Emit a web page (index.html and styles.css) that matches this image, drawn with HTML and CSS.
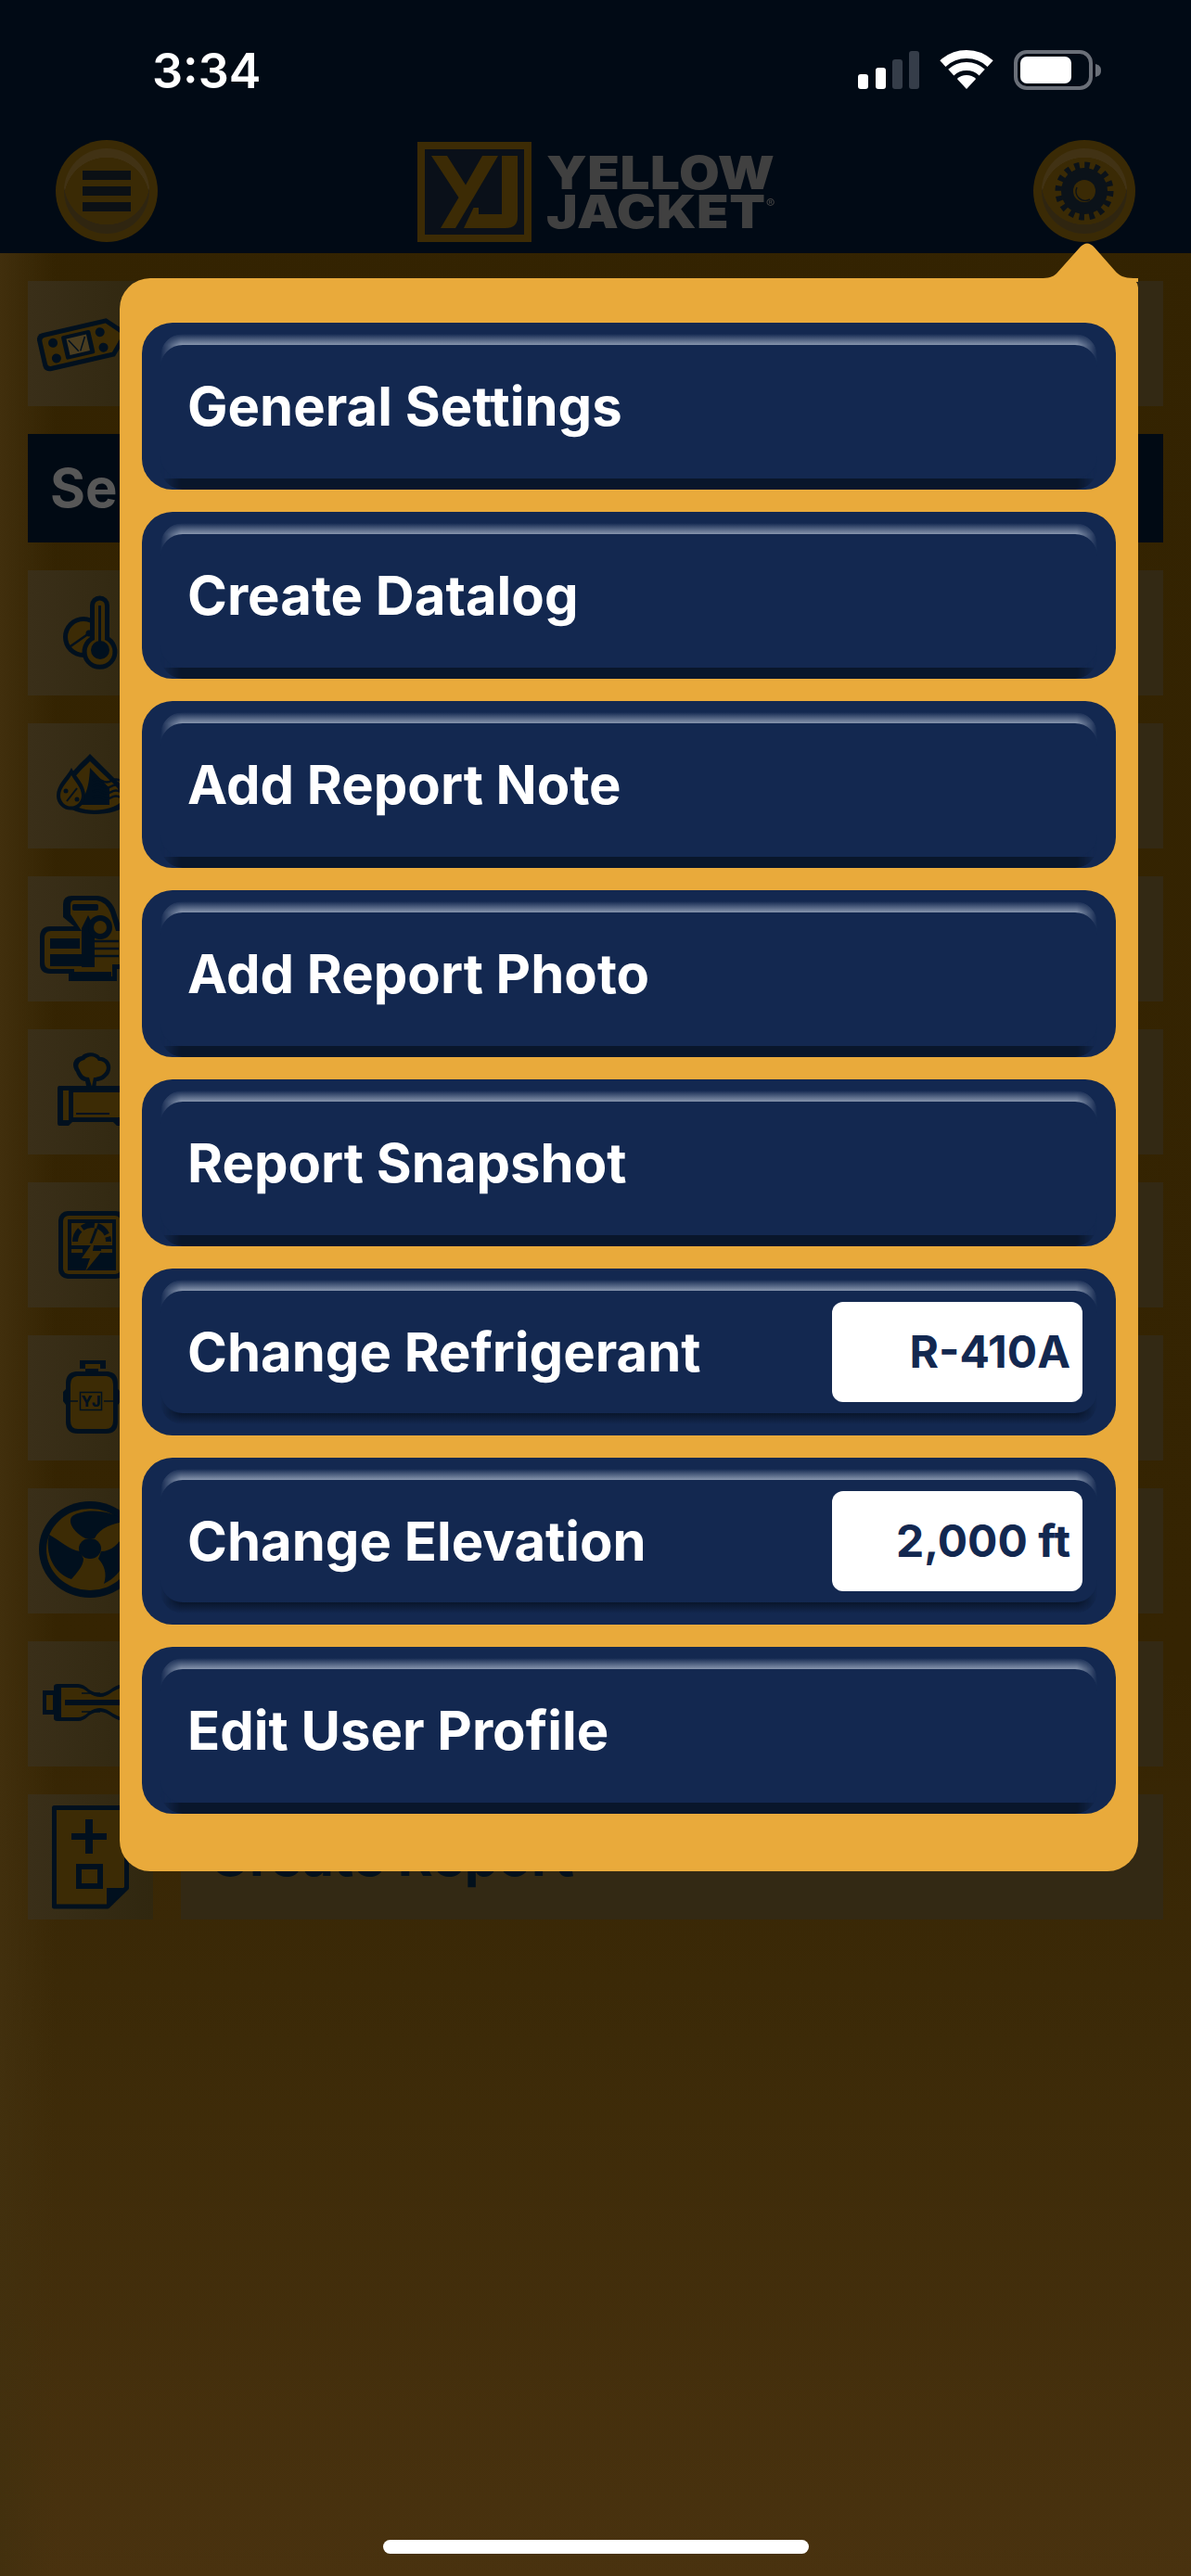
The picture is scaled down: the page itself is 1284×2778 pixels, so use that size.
FILE: index.html
```html
<!DOCTYPE html>
<html lang="en">
<head>
    <meta charset="UTF-8">
    <meta name="viewport" content="width=device-width, initial-scale=1.0">
    <title>Settings Menu</title>
    <link rel="stylesheet" href="styles.css">
</head>
<body>
    <header class="topbar">
        <div class="status">
            <span class="time">3:34</span>
            <svg class="status-icons" viewBox="0 0 262 43">
                <rect x="0" y="26" width="11" height="16" rx="3" fill="#fff"/>
                <rect x="19" y="19" width="11" height="23" rx="3" fill="#fff"/>
                <rect x="37" y="10" width="11" height="32" rx="3" fill="#353d49"/>
                <rect x="55" y="1" width="11" height="41" rx="3" fill="#353d49"/>
                <path d="M91.4 14.6A37.5 37.5 0 0 1 142.6 14.6" fill="none" stroke="#fff" stroke-width="9"/>
                <path d="M100.3 24.1A24.5 24.5 0 0 1 133.7 24.1" fill="none" stroke="#fff" stroke-width="9"/>
                <path d="M117 42L106.8 31A15 15 0 0 1 127.2 31Z" fill="#fff"/>
                <rect x="170" y="2" width="81" height="39" rx="12" fill="none" stroke="#6a6f78" stroke-width="4"/>
                <rect x="175" y="7" width="55" height="29" rx="7" fill="#fff"/>
                <path d="M256 15c4 1 6 3 6 7s-2 6-6 7z" fill="#6a6f78"/>
            </svg>
        </div>
        <nav class="navbar">
            <div class="round-btn">
                <span class="burger"></span>
                <span class="burger"></span>
                <span class="burger"></span>
            </div>
            <div class="logo">
                <svg class="logo-mark" viewBox="0 0 123 108">
                    <rect x="4" y="4" width="115" height="100" fill="#0a1019" stroke="#3c2b05" stroke-width="8"/>
                    <path d="M15 15H32L52 46.500L70 15H87L41 93H25L44.500 60z" fill="#3c2b05"/>
                    <path d="M91 15H108V81Q108 93 95 93H50L60.500 71H66V78H91z" fill="#3c2b05"/>
                </svg>
                <div class="wordmark">
                    <span>YELLOW</span>
                    <span>JACKET<sup>®</sup></span>
                </div>
            </div>
            <div class="round-btn">
                <svg class="gear" viewBox="0 0 64 64">
                    <circle cx="32" cy="32" r="28" fill="none" stroke="#0b1219" stroke-width="7" stroke-dasharray="5.500 5.500"/>
                    <circle cx="32" cy="32" r="25" fill="#0b1219"/>
                    <circle cx="32" cy="32" r="12" fill="#3a2a05"/>
                    <path d="M24 28a10 10 0 0 0 14 13" fill="none" stroke="#0b1219" stroke-width="1.500"/>
                </svg>
            </div>
        </nav>
    </header>

    <main class="screen">
        <div class="row">
            <div class="cell-icon">
                <svg class="row-icon" viewBox="0 0 135 135">
                    <g transform="rotate(-13 62 67)">
                        <path class="ink" d="M19 46H90L110 67 90 88H19a7 7 0 0 1-7-7V53a7 7 0 0 1 7-7z"/>
                        <path class="tan" d="M21 51H88L103 67 88 83H21a4 4 0 0 1-4-4V55a4 4 0 0 1 4-4z"/>
                        <circle class="ink" cx="28" cy="59" r="5"/>
                        <circle class="ink" cx="28" cy="76" r="5"/>
                        <circle class="ink" cx="80" cy="59" r="5"/>
                        <circle class="ink" cx="80" cy="76" r="5"/>
                        <rect class="ink" x="38" y="54" width="32" height="26" rx="2"/>
                        <rect x="43" y="58" width="22" height="18" fill="#4a3d20"/>
                        <path class="line" d="M45 60l8 14m10-14l-8 14" stroke-width="1.500"/>
                    </g>
                </svg>
            </div>
            <div class="cell-label"></div>
        </div>

        <div class="section-head">Se</div>

        <div class="row">
            <div class="cell-icon">
                <svg class="row-icon" viewBox="0 0 135 135">
                    <circle class="ink" cx="60" cy="72" r="22"/>
                    <circle class="tan" cx="60" cy="72" r="17"/>
                    <path class="line" d="M46 82L66 68" stroke-width="2.500"/>
                    <circle class="ink" cx="66" cy="68" r="3.500"/>
                    <path class="ink" d="M67 38a10.500 10.500 0 0 1 21 0V72a19 19 0 1 1-21 0z"/>
                    <path class="tan" d="M72 38a5.500 5.500 0 0 1 11 0V75a14 14 0 1 1-11 0z"/>
                    <circle class="ink" cx="78" cy="86" r="10"/>
                    <rect class="ink" x="76" y="38" width="3" height="40"/>
                </svg>
            </div>
            <div class="cell-label"></div>
        </div>

        <div class="row">
            <div class="cell-icon">
                <svg class="row-icon" viewBox="0 0 135 135">
                    <path class="ink" d="M67 33L96 62C108 72 112 80 106 88 96 100 50 104 36 84 28 70 52 48 67 33z"/>
                    <path class="tan" d="M67 41L90 63C100 72 104 80 100 85 90 96 52 98 42 82 36 70 56 52 67 41z"/>
                    <path class="ink" d="M67 48L88 70V88H50C60 84 66 74 67 48z"/>
                    <path class="ink" d="M47 48C52 58 62 66 62 78A15.500 15.500 0 0 1 31 78C31 66 42 58 47 48z"/>
                    <path class="tan" d="M47 56C50 62 58 69 58 78A11.500 11.500 0 0 1 35 78C35 69 44 62 47 56z"/>
                    <path class="line" d="M42 84L53 70" stroke-width="2"/>
                    <circle class="ink" cx="41" cy="73" r="2.500"/>
                    <circle class="ink" cx="53" cy="82" r="2.500"/>
                    <path class="wave" d="M70 62q5-3 10 0t10 0 10 0M70 68q5-3 10 0t10 0 10 0M70 74q5-3 10 0t10 0 10 0M70 80q5-3 10 0t10 0 10 0"/>
                </svg>
            </div>
            <div class="cell-label"></div>
        </div>

        <div class="row">
            <div class="cell-icon">
                <svg class="row-icon" viewBox="0 0 135 135">
                    <path class="ink" d="M48 21H75Q88 22 94 36L100 54H110V100H96V113H44V105H24Q13 105 13 94V66Q13 54 24 54H50L38 44V30Q38 21 48 21z"/>
                    <path class="tan" d="M50 26H74Q84 27 89 39L95 59H106V95H91V108H50V100H25Q18 100 18 93V67Q18 59 25 59H58L46 41V31Q46 26 50 26z"/>
                    <rect class="ink" x="48" y="30" width="28" height="7" rx="2"/>
                    <path class="ink" d="M24 67H56V78H24zM24 84H58L68 97H24z"/>
                    <path class="ink" d="M58 56L65 42 72 56V98H58z"/>
                    <circle class="ink" cx="78" cy="55" r="13"/>
                    <circle class="tan" cx="78" cy="55" r="7"/>
                    <rect class="ink" x="50" y="103" width="40" height="5"/>
                    <path class="wave" d="M72 70H98M72 78H98M72 86H98" stroke-width="2"/>
                </svg>
            </div>
            <div class="cell-label"></div>
        </div>

        <div class="row">
            <div class="cell-icon">
                <svg class="row-icon" viewBox="0 0 135 135">
                    <path class="ink" d="M52 46C46 38 50 30 58 29 62 24 74 24 78 30 86 30 92 38 88 47 84 54 78 56 74 56L73 66H64L62 56C58 56 54 52 52 46z"/>
                    <path class="tan" d="M56 44C52 38 56 34 61 33 65 28 73 28 76 34 82 33 87 39 84 45 81 50 76 52 71 52L69 62 66 52C61 52 58 49 56 44z"/>
                    <path class="ink" d="M34 61H106V104H96L92 100H48L44 104H34Q32 104 32 101V64Q32 61 34 61z"/>
                    <path class="tan" d="M38 66H44V98H38zM49 68H100V95H49z"/>
                    <rect class="ink" x="52" y="90" width="36" height="2"/>
                </svg>
            </div>
            <div class="cell-label"></div>
        </div>

        <div class="row">
            <div class="cell-icon">
                <svg class="row-icon" viewBox="0 0 135 135">
                    <rect class="ink" x="33" y="31" width="72" height="73" rx="10"/>
                    <rect class="tan" x="38" y="36" width="62" height="63" rx="6"/>
                    <rect class="ink" x="43" y="40" width="52" height="55"/>
                    <rect class="tan" x="47" y="44" width="44" height="24"/>
                    <path class="line" d="M51 64a18 18 0 0 1 36 0" stroke-width="6" stroke-dasharray="14 3"/>
                    <path class="line" d="M68 66L74 50" stroke-width="3"/>
                    <rect class="tan" x="47" y="72" width="12" height="4"/>
                    <rect class="tan" x="79" y="72" width="12" height="4"/>
                    <path class="tan" d="M72 62L58 82H67L62 96 80 74H70z"/>
                </svg>
            </div>
            <div class="cell-label"></div>
        </div>

        <div class="row">
            <div class="cell-icon">
                <svg class="row-icon" viewBox="0 0 135 135">
                    <path class="ink" d="M56 27H84V36H76V39H86Q97 40 97 52V58L100 61V71L97 75V93Q97 106 84 106H54Q41 106 41 93V75L38 71V61L41 58V52Q41 40 52 39H62V36H56z"/>
                    <path class="tan" d="M53 44H85Q92 45 92 53V92Q92 101 84 101H54Q46 101 46 92V53Q46 45 53 44z"/>
                    <rect class="tan" x="62" y="31" width="16" height="5"/>
                    <rect class="line" x="56.500" y="61.500" width="23" height="19" stroke-width="1.500"/>
                    <text class="tank-mark" x="68" y="77" text-anchor="middle">YJ</text>
                    <path class="line" d="M46 71H54M82 71H92" stroke-width="1.500"/>
                </svg>
            </div>
            <div class="cell-label"></div>
        </div>

        <div class="row">
            <div class="cell-icon">
                <svg class="row-icon" viewBox="0 0 135 135">
                    <ellipse class="ink" cx="67" cy="66" rx="55" ry="52"/>
                    <ellipse class="tan" cx="67" cy="66" rx="47" ry="44"/>
                    <path class="ink" d="M62 54C50 48 42 36 48 30 60 22 90 22 104 36 92 38 78 42 72 54z"/>
                    <path class="ink" d="M56 68C44 66 34 56 23 50 18 70 28 92 47 98 52 92 60 84 60 76z"/>
                    <path class="ink" d="M79 68C90 68 98 60 104 50 112 70 104 92 82 103 86 92 82 82 76 76z"/>
                    <ellipse class="ink" cx="67" cy="65" rx="12" ry="11"/>
                </svg>
            </div>
            <div class="cell-label"></div>
        </div>

        <div class="row">
            <div class="cell-icon">
                <svg class="row-icon" viewBox="0 0 135 135">
                    <path class="ink" d="M16 53H28V49Q28 46 32 46H54Q60 46 66 52 72 56 78 56T92 50Q98 46 106 46V86Q98 86 92 82 84 76 78 76T66 80Q60 86 54 86H32Q28 86 28 83V79H16z"/>
                    <path class="tan" d="M20 58H27V74H20zM36 50H54Q60 50 66 56 72 60 78 60T92 54L100 50V82L92 78Q84 72 78 72T66 76Q60 82 54 82H36z"/>
                    <rect class="ink" x="40" y="63" width="62" height="6"/>
                    <path class="line" d="M58 56H78M58 76H78" stroke-width="1.500"/>
                </svg>
            </div>
            <div class="cell-label"></div>
        </div>

        <div class="row">
            <div class="cell-icon">
                <svg class="row-icon" viewBox="0 0 135 135">
                    <path class="tan" stroke="#01101e" stroke-width="5" stroke-linejoin="round" d="M28.500 14.500H106.500V101L86 121H28.500z"/>
                    <path class="ink" d="M62 27h8v15h15v7H70v15h-8V49H47v-7h15z"/>
                    <rect class="doc-box" x="55" y="78" width="23" height="21"/>
                    <path class="ink" d="M85 101H106V104L88 120H85z"/>
                </svg>
            </div>
            <div class="cell-label">Create Report</div>
        </div>
    </main>

    <div class="popup">
        <svg class="popup-arrow" viewBox="0 0 105 42">
            <path d="M0 38C8 38 13 37 17 33L42 5Q50-4 58 5L80 30C84 35 90 38 100 38H105V42H0z"/>
        </svg>
        <button class="menu-btn"><span class="menu-face"><span class="menu-label">General Settings</span></span></button>
        <button class="menu-btn"><span class="menu-face"><span class="menu-label">Create Datalog</span></span></button>
        <button class="menu-btn"><span class="menu-face"><span class="menu-label">Add Report Note</span></span></button>
        <button class="menu-btn"><span class="menu-face"><span class="menu-label">Add Report Photo</span></span></button>
        <button class="menu-btn"><span class="menu-face"><span class="menu-label">Report Snapshot</span></span></button>
        <button class="menu-btn has-value"><span class="menu-face"><span class="menu-label">Change Refrigerant</span><span class="menu-value">R-410A</span></span></button>
        <button class="menu-btn has-value"><span class="menu-face"><span class="menu-label">Change Elevation</span><span class="menu-value">2,000 ft</span></span></button>
        <button class="menu-btn"><span class="menu-face"><span class="menu-label">Edit User Profile</span></span></button>
    </div>

    <div class="home-bar"></div>
</body>
</html>
```

FILE: styles.css
```css
* {
    box-sizing: border-box;
}
body {
    position: relative;
    width: 1284px;
    height: 2778px;
    margin: 0;
    overflow: hidden;
    font-family: Inter, "Liberation Sans", sans-serif;
    background:
        linear-gradient(to right, rgba(66, 48, 14, 0.9), rgba(66, 48, 14, 0) 60px),
        linear-gradient(#332301 0, #352402 1800px, #3c2a08 2200px, #49320f 100%);
}

/* top bar */
.topbar {
    height: 273px;
    background: #010a15;
}
.status {
    display: flex;
    justify-content: space-between;
    height: 151px;
    padding: 54px 97px 0 164px;
}
.time {
    margin-top: 1px;
    color: #fff;
    font-size: 52px;
    font-weight: 600;
    line-height: 44px;
}
.status-icons {
    width: 262px;
    height: 43px;
}
.navbar {
    display: flex;
    justify-content: space-between;
    padding: 0 60px;
}
.round-btn {
    position: relative;
    display: flex;
    flex-direction: column;
    align-items: center;
    justify-content: center;
    gap: 7px;
    width: 110px;
    height: 110px;
    border-radius: 50%;
    background: #3a2a05;
}
.round-btn::before,
.round-btn::after {
    content: "";
    position: absolute;
    inset: 9px;
    border-radius: 50%;
}
.round-btn::before {
    background: radial-gradient(circle at 50% 56px, transparent 46px, #413214 46.500px);
}
.round-btn::after {
    background: radial-gradient(circle at 50% 36px, transparent 46px, #2f2510 46.500px);
}
.burger {
    position: relative;
    z-index: 1;
    width: 52px;
    height: 10px;
    background: #0b1015;
}
.gear {
    position: relative;
    z-index: 1;
    width: 64px;
    height: 64px;
}
.logo {
    display: flex;
    gap: 16px;
    margin-top: 2px;
}
.logo-mark {
    width: 123px;
    height: 108px;
}
.wordmark {
    display: flex;
    flex-direction: column;
    width: 246px;
    padding-top: 12px;
    color: #404040;
    font-size: 50px;
    font-weight: 900;
    letter-spacing: 0.5px;
    line-height: 42px;
    transform: scaleX(1.13);
    transform-origin: left;
}
.wordmark sup {
    font-size: 13px;
    font-weight: 500;
    line-height: 0;
    vertical-align: 22px;
}

/* list behind the popup */
.screen {
    display: flex;
    flex-direction: column;
    gap: 30px;
    padding: 30px;
}
.row {
    display: flex;
    gap: 30px;
    height: 135px;
}
.cell-icon {
    flex: 0 0 135px;
    background: linear-gradient(to right, #3a2f19, #30270f);
}
.cell-label {
    flex: 1;
    padding: 0 31px;
    background: #332914;
    color: #02101c;
    font-size: 58px;
    font-weight: 700;
    line-height: 135px;
}
.section-head {
    height: 117px;
    padding-left: 24px;
    background: #010a14;
    color: #575757;
    font-size: 58px;
    font-weight: 700;
    line-height: 117px;
}
.row-icon {
    display: block;
    width: 135px;
    height: 135px;
}
.ink {
    fill: #01101e;
}
.tan {
    fill: #3c2b05;
}
.line {
    fill: none;
    stroke: #01101e;
}
.wave {
    fill: none;
    stroke: #01101e;
    stroke-width: 2.5;
}
.doc-box {
    fill: none;
    stroke: #01101e;
    stroke-width: 6;
}
.tank-mark {
    fill: #01101e;
    font-size: 16px;
    font-weight: 800;
}

/* popup menu */
.popup {
    position: absolute;
    top: 300px;
    left: 129px;
    display: flex;
    flex-direction: column;
    gap: 24px;
    width: 1098px;
    height: 1718px;
    padding: 48px 24px 0;
    border-radius: 33px 10px 33px 33px;
    background: #e9aa3b;
}
.popup-arrow {
    position: absolute;
    top: -38px;
    left: 993px;
    width: 105px;
    height: 42px;
    fill: #e9aa3b;
}
.menu-btn {
    position: relative;
    display: block;
    flex: 0 0 180px;
    width: 100%;
    padding: 24px 20px 12px;
    border: none;
    border-radius: 33px;
    background: #132850;
    color: #fff;
    font-family: inherit;
    text-align: left;
    overflow: hidden;
}
.menu-btn.has-value {
    padding-bottom: 24px;
}
.menu-btn::before,
.menu-btn::after {
    content: "";
    position: absolute;
    left: 20px;
    right: 20px;
    height: 40px;
    -webkit-mask-image: linear-gradient(to right, transparent, #000 22px, #000 calc(100% - 22px), transparent);
    mask-image: linear-gradient(to right, transparent, #000 22px, #000 calc(100% - 22px), transparent);
}
.menu-btn::before {
    top: 12px;
    border-radius: 24px 24px 0 0;
    background: linear-gradient(#132850 0, #8795ad 12px);
}
.menu-btn::after {
    bottom: 0;
    border-radius: 0 0 24px 24px;
    background: linear-gradient(to top, #09162b 0, #09162b 12px, #132850 12px);
}
.menu-btn.has-value::after {
    bottom: 12px;
    border-radius: 0 0 24px 24px;
    background: linear-gradient(to top, #132850 0, #09162b 12px);
}
.menu-face {
    position: relative;
    z-index: 1;
    display: flex;
    align-items: center;
    justify-content: space-between;
    height: 100%;
    padding: 0 16px 12px 29px;
    border-radius: 24px;
    background: #132850;
}
.has-value .menu-face {
    padding-bottom: 0;
}
.menu-label {
    font-size: 58px;
    font-weight: 700;
    line-height: 68px;
}
.menu-value {
    width: 270px;
    height: 108px;
    padding-right: 13px;
    border-radius: 12px;
    background: #fff;
    color: #132850;
    font-size: 48px;
    font-weight: 700;
    line-height: 108px;
    text-align: right;
}

.home-bar {
    position: absolute;
    left: 413px;
    bottom: 24px;
    width: 459px;
    height: 15px;
    border-radius: 8px;
    background: #fff;
}
```
